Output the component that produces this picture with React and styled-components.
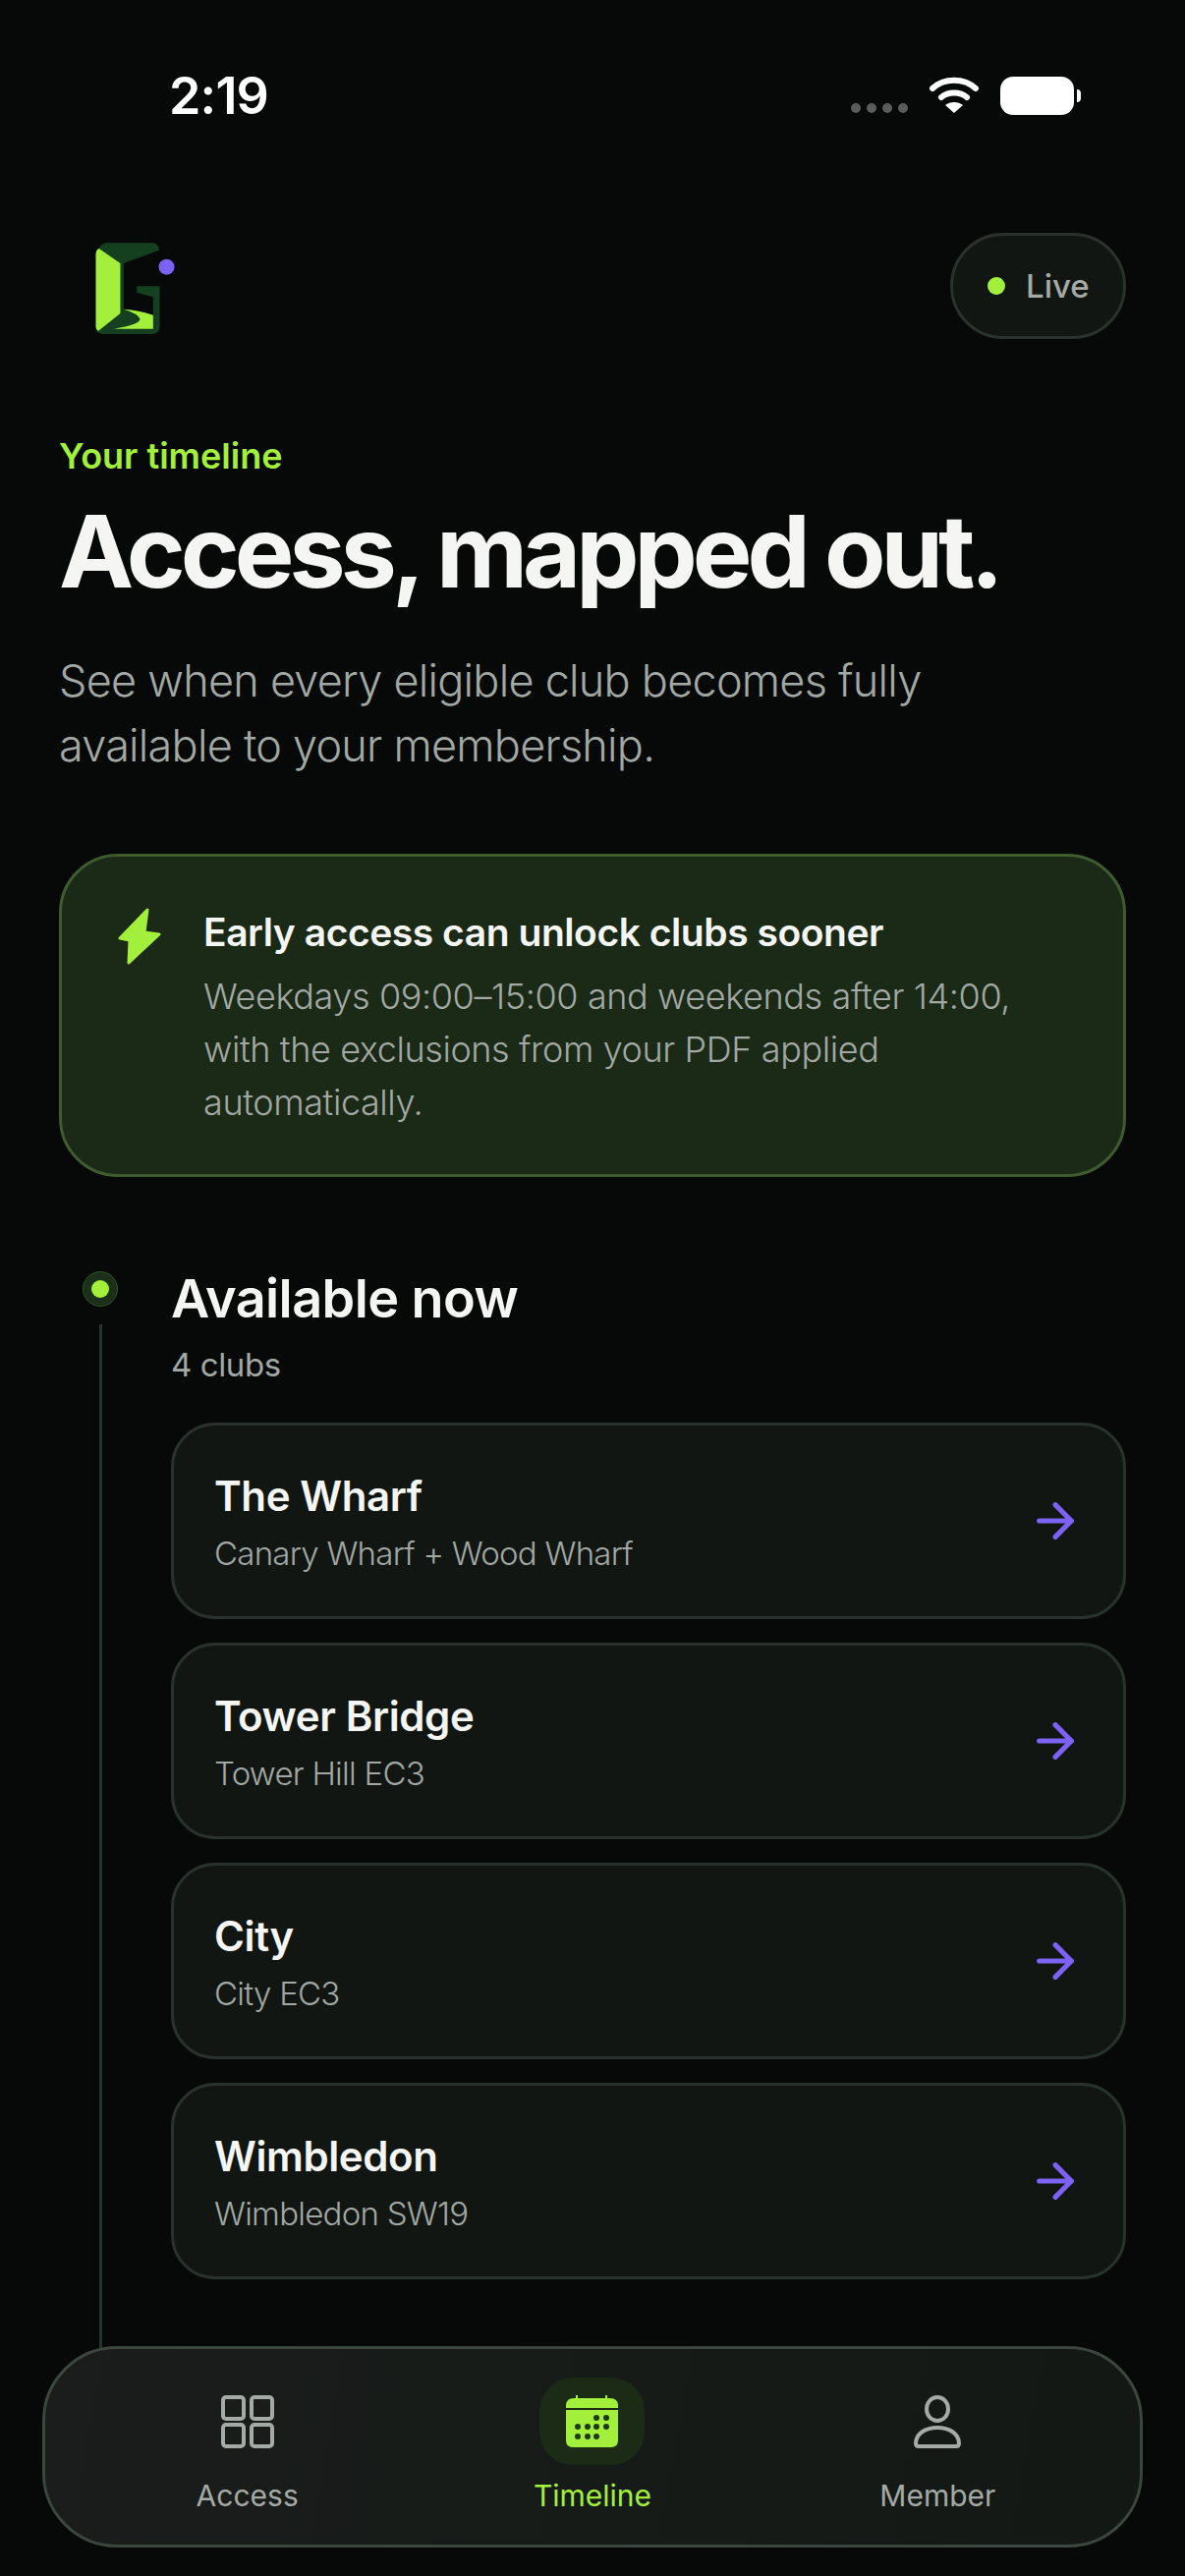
import React from 'react'
import styled, { createGlobalStyle } from 'styled-components'
import { ArrowRight } from 'lucide-react'

const lime = '#a3f03c'
const violet = '#7c62f5'
const sans = `Inter, "Noto Sans", sans-serif`

const GlobalStyle = createGlobalStyle`
  html, body {
    margin: 0;
    padding: 0;
    background: #060907;
  }
  * {
    box-sizing: border-box;
  }
`

const Screen = styled.div`
  position: relative;
  width: 1206px;
  height: 2622px;
  overflow: hidden;
  background: #060907;
  font-family: ${sans};
  color: #f5f6f4;
`

const StatusBar = styled.div`
  display: flex;
  align-items: flex-start;
  justify-content: space-between;
  height: 237px;
  padding: 72px 113px 0 172px;
`

const Clock = styled.div`
  font-size: 52px;
  line-height: 52px;
  font-weight: 600;
  letter-spacing: -0.8px;
  color: #fff;
`

const StatusIcons = styled.div`
  display: flex;
  align-items: flex-start;
  gap: 22px;
  padding-top: 6px;
`

const SignalDots = styled.div`
  display: flex;
  gap: 6px;
  margin-top: 27px;
  i {
    display: block;
    width: 10px;
    height: 10px;
    border-radius: 50%;
    background: #5a5b5a;
  }
`

const Battery = styled.div`
  position: relative;
  width: 75px;
  height: 39px;
  border-radius: 13px;
  background: #fff;
  &::after {
    content: '';
    position: absolute;
    left: 78px;
    top: 13px;
    width: 4px;
    height: 13px;
    border-radius: 0 4px 4px 0;
    background: #fff;
  }
`

const Header = styled.header`
  display: flex;
  align-items: center;
  justify-content: space-between;
  padding: 0 60px 0 94px;
  svg {
    margin-top: 5px;
  }
`

const Pill = styled.div`
  display: flex;
  align-items: center;
  gap: 21px;
  width: 179px;
  height: 108px;
  padding-left: 35px;
  border: 3px solid #29322c;
  border-radius: 54px;
  background: #111613;
  font-size: 33px;
  font-weight: 500;
  color: #a4aaa5;
`

const LiveDot = styled.span`
  width: 18px;
  height: 18px;
  border-radius: 50%;
  background: ${lime};
`

const Intro = styled.section`
  padding: 0 60px;
  margin-top: 97px;
`

const Eyebrow = styled.div`
  font-size: 36px;
  line-height: 44px;
  font-weight: 600;
  color: ${lime};
`

const Headline = styled.h1`
  margin: 13px 0 0;
  font-size: 102px;
  line-height: 124px;
  font-weight: 700;
  letter-spacing: -5px;
  color: #f5f6f4;
  white-space: nowrap;
`

const Lede = styled.p`
  margin: 37px 0 0;
  font-size: 45px;
  line-height: 66px;
  font-weight: 300;
  letter-spacing: -0.75px;
  color: #a2a8a3;
`

const Callout = styled.section`
  display: flex;
  gap: 43px;
  margin: 77px 60px 0;
  height: 329px;
  padding: 52px 60px 0;
  border: 3px solid #3f5c2e;
  border-radius: 60px;
  background: #1b2917;
`

const CalloutIcon = styled.svg`
  flex: none;
  width: 44px;
  height: 58px;
  margin-left: -3px;
`

const CalloutTitle = styled.div`
  font-size: 39px;
  line-height: 50px;
  font-weight: 600;
  letter-spacing: -0.45px;
  color: #f5f6f4;
  white-space: nowrap;
`

const CalloutText = styled.div`
  margin-top: 13px;
  font-size: 36px;
  line-height: 54px;
  font-weight: 300;
  letter-spacing: -0.4px;
  color: #a2a8a3;
`

const Timeline = styled.section`
  display: grid;
  grid-template-columns: 114px 1fr;
  margin: 93px 60px 0;
`

const Rail = styled.div`
  display: flex;
  flex-direction: column;
  align-items: center;
  width: 84px;
`

const RailDot = styled.div`
  display: flex;
  flex: none;
  align-items: center;
  justify-content: center;
  width: 36px;
  height: 36px;
  margin-top: 3px;
  border-radius: 50%;
  border: 1px solid #2f5a20;
  background: #1c2f1a;
  &::after {
    content: '';
    width: 18px;
    height: 18px;
    border-radius: 50%;
    background: ${lime};
  }
`

const RailLine = styled.div`
  width: 3px;
  height: 1100px;
  margin-top: 18px;
  background: #29322c;
`

const GroupTitle = styled.h2`
  margin: 0;
  font-size: 54px;
  line-height: 62px;
  font-weight: 600;
  letter-spacing: -0.6px;
  color: #f5f6f4;
`

const GroupCount = styled.div`
  margin-top: 14px;
  font-size: 33px;
  line-height: 44px;
  font-weight: 400;
  letter-spacing: -0.4px;
  color: #a2a8a3;
`

const ClubList = styled.div`
  display: flex;
  flex-direction: column;
  gap: 24px;
  margin-top: 37px;
`

const ClubCard = styled.article`
  display: flex;
  align-items: center;
  justify-content: space-between;
  height: 200px;
  padding: 0 41px 0 41px;
  border: 3px solid #29322c;
  border-radius: 45px;
  background: #111613;
  svg {
    color: ${violet};
    flex: none;
  }
`

const ClubText = styled.div`
  padding-top: 4px;
`

const ClubName = styled.div`
  font-size: 42px;
  line-height: 54px;
  font-weight: 600;
  letter-spacing: -0.4px;
  color: #f5f6f4;
`

const ClubArea = styled.div`
  margin-top: 8px;
  font-size: 33px;
  line-height: 46px;
  font-weight: 300;
  letter-spacing: -0.75px;
  color: #a2a8a3;
`

const TabBar = styled.nav`
  position: absolute;
  left: 43px;
  top: 2388px;
  display: grid;
  grid-template-columns: repeat(3, 1fr);
  width: 1120px;
  height: 205px;
  padding: 0 30px;
  border: 3px solid #3b463f;
  border-radius: 76px;
  background: linear-gradient(100deg, #1a1d1b, #131815);
`

const Tab = styled.div`
  display: flex;
  flex-direction: column;
  align-items: center;
  padding-top: 29px;
  color: ${props => (props.$active ? lime : '#a4aaa5')};
`

const TabIconWrap = styled.div`
  display: flex;
  align-items: center;
  justify-content: center;
  width: 107px;
  height: 89px;
  border-radius: 34px;
  background: ${props => (props.$active ? '#1b2b15' : 'transparent')};
`

const TabLabel = styled.div`
  margin-top: 11px;
  font-size: 30px;
  line-height: 40px;
  font-weight: 400;
`

const Logo = () => (
  <svg width="87" height="100" viewBox="100 70 260 300">
    <path
      fill="#14401f"
      d="M120 97Q128 80 145 80H285Q302 82 303 102L195 142V282Q240 285 285 300V245L235 232V212H305V335Q305 358 282 358H135Q120 358 112 350L185 295V142Z"
    />
    <path
      fill={lime}
      d="M110 112Q111 100 120 97L185 142V295L117 349Q110 345 110 335Z"
    />
    <path
      fill={lime}
      d="M195 282Q240 285 285 300V342H165Q245 328 245 312 240 296 195 282Z"
    />
    <circle cx="326" cy="153" r="24" fill={violet} />
  </svg>
)

const Wifi = () => (
  <svg width="50" height="37" viewBox="0 0 50 37" fill="none">
    <path d="M3 12C15 1 35 1 47 12" stroke="#fff" strokeWidth="6" strokeLinecap="round" />
    <path d="M12 21C19 15 31 15 38 21" stroke="#fff" strokeWidth="6" strokeLinecap="round" />
    <path d="M25 37L16 29C21 25 29 25 34 29Z" fill="#fff" />
  </svg>
)

const GridIcon = () => (
  <svg width="54" height="54" viewBox="0 0 54 54" fill="none" stroke="currentColor" strokeWidth="4">
    <rect x="2" y="2" width="21" height="22" rx="3" />
    <rect x="31" y="2" width="21" height="22" rx="3" />
    <rect x="2" y="30" width="21" height="22" rx="3" />
    <rect x="31" y="30" width="21" height="22" rx="3" />
  </svg>
)

const calendarDots = [
  [31, 23], [41, 23],
  [12, 32], [22, 32], [31, 32], [41, 32],
  [12, 42], [22, 42], [31, 42],
]

const CalendarIcon = () => (
  <svg width="53" height="53" viewBox="0 0 53 53">
    <path fill={lime} d="M10 0h2v4h-2zM40 0h2v4h-2z" />
    <path fill={lime} d="M8 3H45Q53 3 53 11V13H0V11Q0 3 8 3Z" />
    <path fill={lime} d="M0 15H53V46Q53 53 46 53H7Q0 53 0 46Z" />
    {calendarDots.map(([cx, cy]) => (
      <circle key={`${cx}-${cy}`} cx={cx} cy={cy} r="3" fill="#1e3a12" />
    ))}
  </svg>
)

const PersonIcon = () => (
  <svg width="54" height="54" viewBox="0 0 54 54" fill="none" stroke="currentColor" strokeWidth="4">
    <ellipse cx="27" cy="14" rx="11" ry="12" />
    <path d="M5 49C5 39 15 33 27 33S49 39 49 49Q49 52 46 52H8Q5 52 5 49Z" />
  </svg>
)

const clubs = [
  { name: 'The Wharf', area: 'Canary Wharf + Wood Wharf' },
  { name: 'Tower Bridge', area: 'Tower Hill EC3' },
  { name: 'City', area: 'City EC3' },
  { name: 'Wimbledon', area: 'Wimbledon SW19' },
]

export default function App() {
  return (
    <Screen>
      <GlobalStyle />
      <StatusBar>
        <Clock>2:19</Clock>
        <StatusIcons>
          <SignalDots>
            <i /><i /><i /><i />
          </SignalDots>
          <Wifi />
          <Battery />
        </StatusIcons>
      </StatusBar>

      <Header>
        <Logo />
        <Pill>
          <LiveDot />
          Live
        </Pill>
      </Header>

      <Intro>
        <Eyebrow>Your timeline</Eyebrow>
        <Headline>Access, mapped out.</Headline>
        <Lede>
          See when every eligible club becomes fully
          <br />
          available to your membership.
        </Lede>
      </Intro>

      <Callout>
        <CalloutIcon viewBox="0 0 44 58">
          <path
            fill={lime}
            stroke={lime}
            strokeWidth="3"
            strokeLinejoin="round"
            d="M30 2L27 25 42 27 11 56 12 33 2 31Z"
          />
        </CalloutIcon>
        <div>
          <CalloutTitle>Early access can unlock clubs sooner</CalloutTitle>
          <CalloutText>
            Weekdays 09:00–15:00 and weekends after 14:00,
            <br />
            with the exclusions from your PDF applied
            <br />
            automatically.
          </CalloutText>
        </div>
      </Callout>

      <Timeline>
        <Rail>
          <RailDot />
          <RailLine />
        </Rail>
        <div>
          <GroupTitle>Available now</GroupTitle>
          <GroupCount>4 clubs</GroupCount>
          <ClubList>
            {clubs.map(club => (
              <ClubCard key={club.name}>
                <ClubText>
                  <ClubName>{club.name}</ClubName>
                  <ClubArea>{club.area}</ClubArea>
                </ClubText>
                <ArrowRight size={56} strokeWidth={2.2} />
              </ClubCard>
            ))}
          </ClubList>
        </div>
      </Timeline>

      <TabBar>
        <Tab>
          <TabIconWrap><GridIcon /></TabIconWrap>
          <TabLabel>Access</TabLabel>
        </Tab>
        <Tab $active>
          <TabIconWrap $active><CalendarIcon /></TabIconWrap>
          <TabLabel>Timeline</TabLabel>
        </Tab>
        <Tab>
          <TabIconWrap><PersonIcon /></TabIconWrap>
          <TabLabel>Member</TabLabel>
        </Tab>
      </TabBar>
    </Screen>
  )
}
